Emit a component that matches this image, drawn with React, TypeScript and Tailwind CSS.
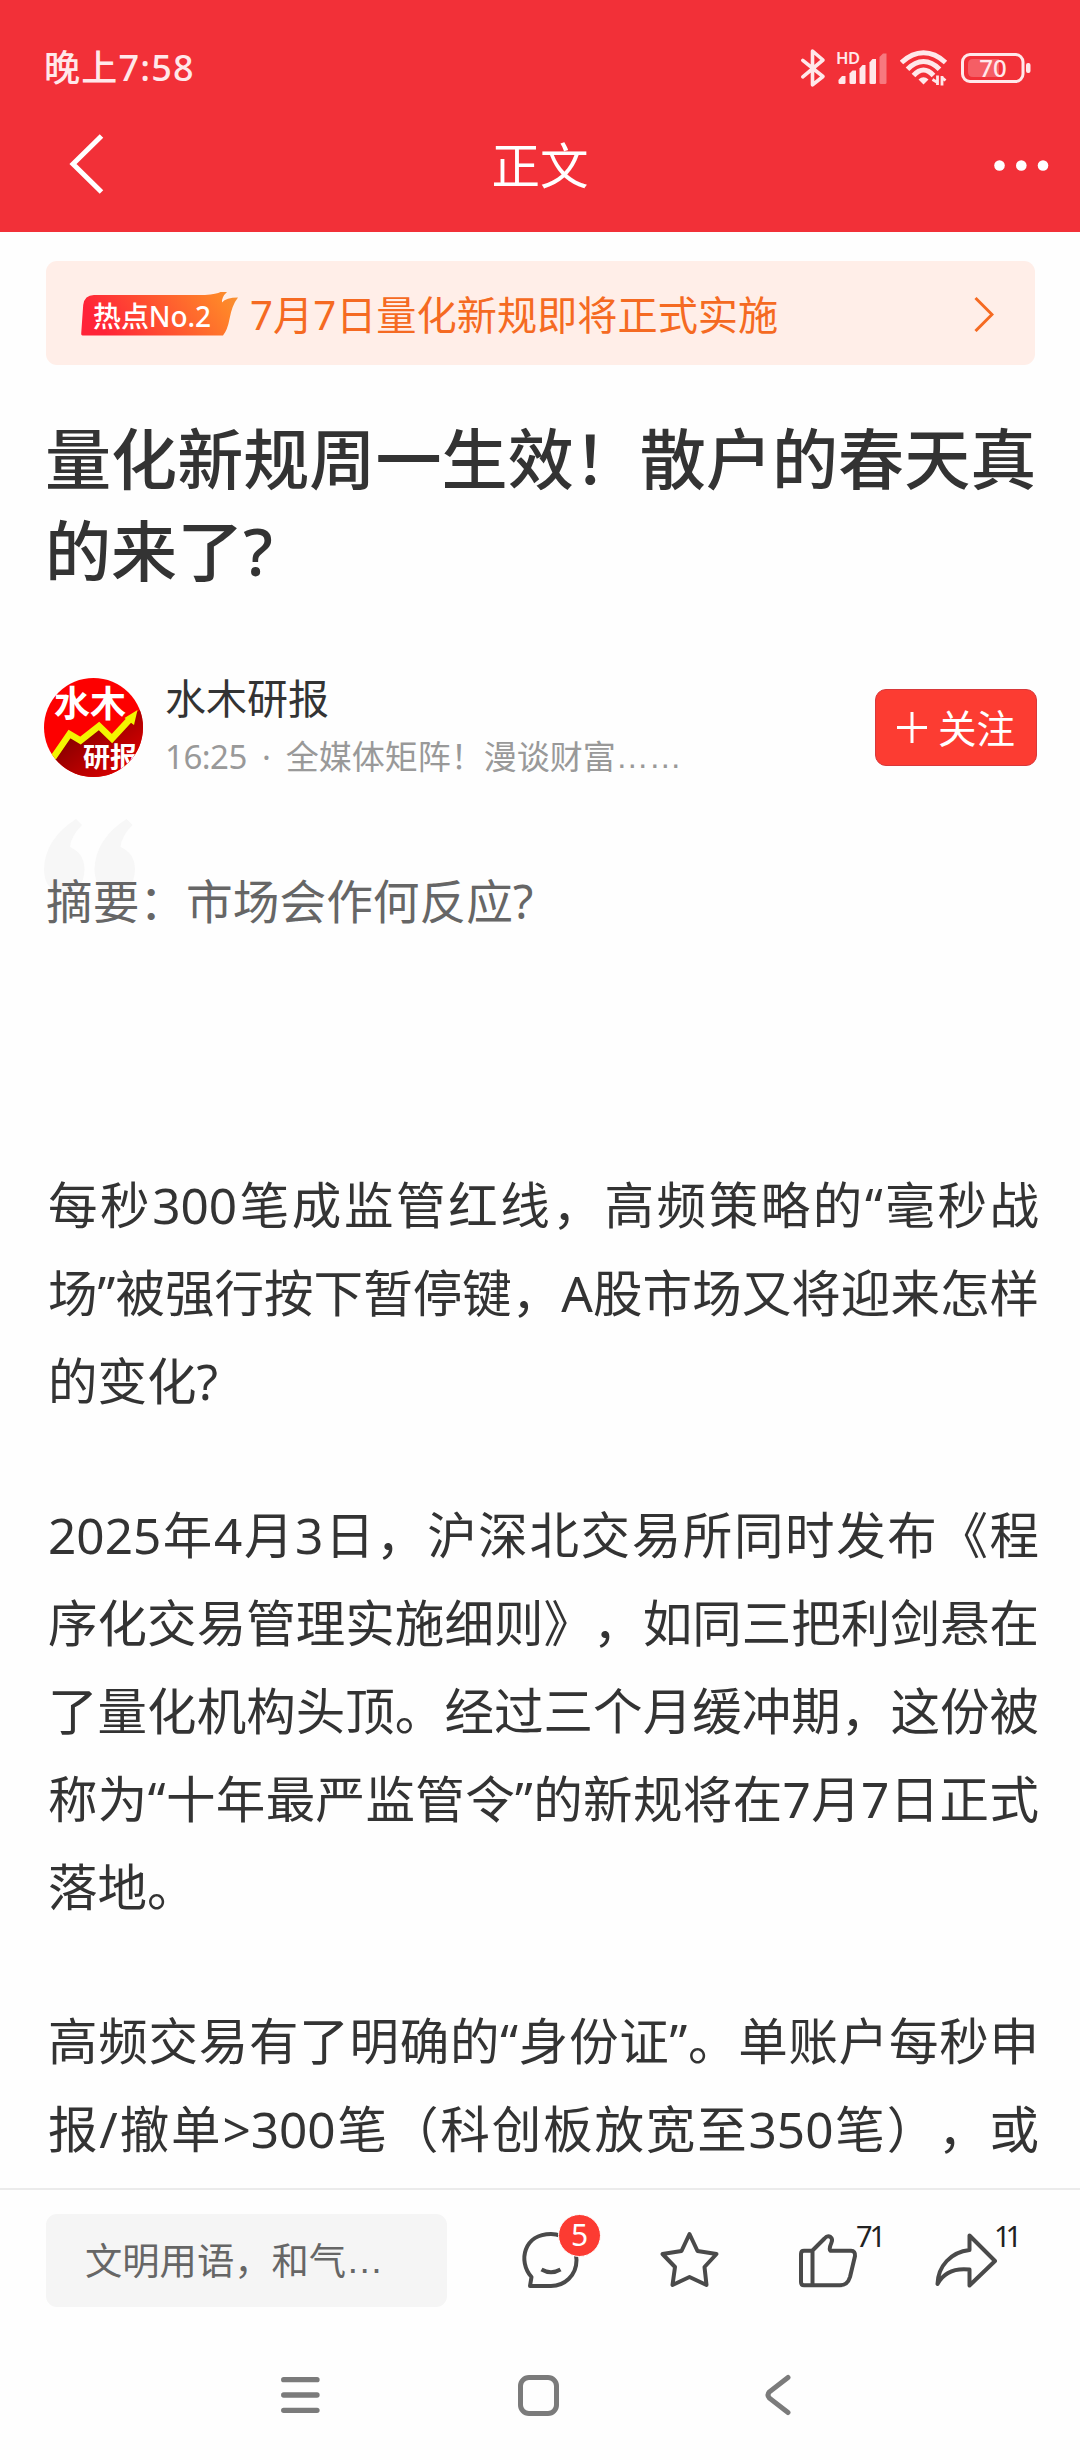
import { ReactNode } from "react";

const paragraphs = [
  [
    "每秒300笔成监管红线，高频策略的“毫秒战",
    "场”被强行按下暂停键，A股市场又将迎来怎样",
    "的变化?",
  ],
  [
    "2025年4月3日，沪深北交易所同时发布《程",
    "序化交易管理实施细则》，如同三把利剑悬在",
    "了量化机构头顶。经过三个月缓冲期，这份被",
    "称为“十年最严监管令”的新规将在7月7日正式",
    "落地。",
  ],
  [
    "高频交易有了明确的“身份证”。单账户每秒申",
    "报/撤单>300笔（科创板放宽至350笔），或",
  ],
];

function BluetoothIcon() {
  return (
    <svg width="26" height="40" viewBox="0 0 26 40" fill="none" stroke="currentColor" strokeWidth="3.6" strokeLinejoin="round" strokeLinecap="round">
      <path d="M2.8 12.4 L23 28.5 L12.5 36.8 V3 L23 12 L2.8 28.8" />
    </svg>
  );
}

function SignalIcon() {
  return (
    <svg className="overflow-visible" width="52" height="36" viewBox="0 0 52 36" fill="currentColor">
      <text x="0" y="15" fontSize="16.5" fontWeight="600" fontFamily="Noto Sans, sans-serif" textLength="24">HD</text>
      <path d="M2.5 31 L6 27 H9.5 V33.5 Q9.5 35 8 35 H4 Q2.5 35 2.5 33.5 Z" />
      <path d="M13.5 24.5 L16.5 21.5 H20 V33.5 Q20 35 18.5 35 H15 Q13.5 35 13.5 33.5 Z" />
      <path d="M23.5 19.5 L26.5 16 H29.5 V33.5 Q29.5 35 28 35 H25 Q23.5 35 23.5 33.5 Z" />
      <path d="M33.5 13.5 L36.5 10 H40 V33.5 Q40 35 38.5 35 H35 Q33.5 35 33.5 33.5 Z" />
      <path opacity=".4" d="M43.5 8 L47 4.5 H50.5 V33.5 Q50.5 35 49 35 H45 Q43.5 35 43.5 33.5 Z" />
    </svg>
  );
}

function WifiIcon() {
  return (
    <svg width="48" height="38" viewBox="0 0 48 38" fill="none" stroke="currentColor" strokeWidth="5">
      <path d="M1.5 14.5 Q12 4.8 23.5 4.8 Q35 4.8 45.5 14.5" />
      <path d="M7.5 21.2 Q15 13.4 23.5 13.4 Q32 13.4 39.5 21.2" />
      <path d="M13.5 27.5 Q18.5 22 23.5 22 Q28.5 22 33.5 27.5" />
      <path d="M18.5 31.5 Q23.5 27 28.5 31.5 L23.5 36.5 Z" fill="currentColor" stroke="none" />
      <path d="M37.5 27.5 V37 M37.5 34.5 L32.5 31.5 M42 37.5 V28 M42 29.5 L45.5 32.5" strokeWidth="2.8" />
    </svg>
  );
}

function BatteryIcon() {
  return (
    <svg width="71" height="32" viewBox="0 0 71 32" fill="none">
      <rect x="1.5" y="2.5" width="60.5" height="27" rx="7.5" stroke="currentColor" strokeWidth="3" />
      <path d="M12 7 H38 V25 H12 Q7 25 7 20 V12 Q7 7 12 7 Z" fill="currentColor" opacity=".25" />
      <rect x="65" y="11" width="4.5" height="10" rx="2" fill="currentColor" />
      <text x="32" y="24.6" textAnchor="middle" fontSize="24" fontWeight="500" fontFamily="Noto Sans, sans-serif" fill="currentColor">70</text>
    </svg>
  );
}

function HotBadge() {
  return (
    <svg width="158" height="46" viewBox="0 0 158 46">
      <defs>
        <linearGradient id="hot" x1="0" y1="0.2" x2="1" y2="0">
          <stop offset="0" stopColor="#ff2338" />
          <stop offset="0.85" stopColor="#ff8429" />
          <stop offset="1" stopColor="#f59335" />
        </linearGradient>
      </defs>
      <path
        d="M1.5 45.5 Q0 45.5 .2 43.5 L2.2 15 Q3.5 5 13 5 H124 Q136 4 139.5 2 H146 Q140.5 7 141 12.5 Q145 7.5 157 7.5 Q151 15 148.5 29 Q146.5 40 142 45.5 Z"
        fill="url(#hot)"
      />
      <text x="12" y="36.5" fontSize="28" fontWeight="500" fontFamily="Noto Sans, Noto Sans CJK SC, sans-serif" fill="#fff" textLength="118">热点No.2</text>
    </svg>
  );
}

function Avatar() {
  return (
    <svg className="overflow-visible" width="99" height="99" viewBox="0 0 99 99">
      <defs>
        <linearGradient id="shade" x1="0.2" y1="0.3" x2="0.9" y2="1">
          <stop offset="0.1" stopColor="#8c0000" />
          <stop offset="1" stopColor="#e80000" />
        </linearGradient>
        <clipPath id="round">
          <circle cx="49.5" cy="49.5" r="49.5" />
        </clipPath>
      </defs>
      <g clipPath="url(#round)">
        <rect width="99" height="99" fill="#fd0000" />
        <path d="M8 86 L26 60 L37 65 L55 51 L68 62 L93 34 L99 30 V99 H8 Z" fill="url(#shade)" />
        <path d="M9 80 L25.5 56 L36.5 62.5 L55 48 L68 60.5 L87 40" fill="none" stroke="#f3f500" strokeWidth="6.5" />
        <path d="M93.5 32 L80.5 40 L90 47 Z" fill="#f3f500" />
        <text x="39" y="89" fontSize="27" fontWeight="700" fontFamily="Noto Sans CJK SC, sans-serif" fill="#fff">研报</text>
      </g>
      <text x="10" y="38.5" fontSize="36" fontWeight="700" fontFamily="Noto Sans CJK SC, sans-serif" fill="#fff">水木</text>
    </svg>
  );
}

function QuoteMark() {
  return (
    <svg width="92" height="74" viewBox="0 0 92 74" fill="#f7f7f7">
      <path d="M32 0 L38 6 Q27 17 26 28 Q40 34 40.5 50 Q40 73 20 74 Q0 72 0 50 Q1 20 32 0 Z" />
      <path d="M82.5 0 L88.5 6 Q77.5 17 76.5 28 Q90.5 34 91 50 Q90.5 73 70.5 74 Q50.5 72 50.5 50 Q51.5 20 82.5 0 Z" />
    </svg>
  );
}

function ActionIcon({ children }: { children: ReactNode }) {
  return (
    <svg width="66" height="60" viewBox="0 0 66 60" fill="none" stroke="#4a4a4a" strokeWidth="4" strokeLinejoin="round" strokeLinecap="round">
      {children}
    </svg>
  );
}

export default function App() {
  return (
    <div className="w-[1080px] h-[2460px] flex flex-col bg-[#fefefe] overflow-hidden text-[#333] whitespace-nowrap [text-spacing-trim:space-all] font-['Noto_Sans','Noto_Sans_CJK_SC',sans-serif]">
      {/* Header */}
      <header className="h-[232px] bg-[#f23038] text-white shrink-0">
        <div className="h-[120px] pt-[48px] pl-[44px] pr-[48px] flex items-start justify-between text-[#ffe8ea]">
          <span className="text-[36px] leading-[40px] font-medium tracking-[1.2px]">晚上7:58</span>
          <div className="flex items-start">
            <BluetoothIcon />
            <div className="ml-[10px] mt-px">
              <SignalIcon />
            </div>
            <div className="ml-[12px]">
              <WifiIcon />
            </div>
            <div className="ml-[13px] mt-[4px]">
              <BatteryIcon />
            </div>
          </div>
        </div>
        <div className="h-[90px] px-[30px] grid grid-cols-[1fr_auto_1fr] items-center">
          <svg className="ml-[38px]" width="60" height="62" viewBox="0 0 60 62" fill="none" stroke="currentColor" strokeWidth="5">
            <path d="M33.5 2 L5 30 L33.5 58" />
          </svg>
          <h1 className="text-[48.5px] leading-[60px]">正文</h1>
          <svg className="justify-self-end" width="56" height="12" viewBox="0 0 56 12" fill="currentColor">
            <circle cx="5.5" cy="6.5" r="5.3" />
            <circle cx="27.3" cy="6.5" r="5.3" />
            <circle cx="49" cy="6.5" r="5.3" />
          </svg>
        </div>
      </header>

      <main className="px-[46px] flex-1 min-h-0">
        {/* Hot topic */}
        <div className="mt-[29px] w-[989px] h-[104px] rounded-[11px] bg-[#ffeee8] pl-[35px] pr-[41px] flex items-center">
          <HotBadge />
          <span className="ml-[11px] pt-[4px] text-[40.2px] leading-[50px] text-[#f56a22]">7月7日量化新规即将正式实施</span>
          <svg className="ml-auto mt-px" width="20" height="36" viewBox="0 0 20 36" fill="none" stroke="#f56a22" strokeWidth="3">
            <path d="M1.5 2 L18 18.5 L1.5 35" />
          </svg>
        </div>

        {/* Title */}
        <h2 className="mt-[47px] -ml-px text-[66.1px] leading-[92px] font-medium text-[#333]">
          量化新规周一生效！散户的春天真
          <br />
          的来了?
        </h2>

        {/* Author */}
        <div className="mt-[77px] h-[108px] -ml-[2px] -mr-[3px] flex items-center">
          <Avatar />
          <div className="ml-[22px] flex flex-col">
            <span className="text-[41px] leading-[58px]">水木研报</span>
            <span className="flex text-[33px] leading-[58px] pt-px text-[#999]">
              <span className="tracking-[-0.5px]">16:25</span>
              <span className="w-[39px] text-center">·</span>
              全媒体矩阵！漫谈财富
              <span className="font-['Liberation_Sans',sans-serif]">……</span>
            </span>
          </div>
          <button className="ml-auto w-[162px] h-[77px] rounded-[11px] border border-[#d8383a] bg-[#fc3c32] text-white flex items-center pl-[21px]">
            <svg width="30" height="31" viewBox="0 0 30 31" stroke="currentColor" strokeWidth="3">
              <path d="M0 15.5 H30 M15 0 V31" />
            </svg>
            <span className="ml-[11px] pt-[2px] text-[38.5px] leading-[50px]">关注</span>
          </button>
        </div>

        {/* Summary */}
        <div className="relative mt-[36px] h-[116px] pt-[54px]">
          <div className="absolute -left-[2px] top-[2px]">
            <QuoteMark />
          </div>
          <p className="relative text-[46.7px] leading-[60px] text-[#666]">摘要：市场会作何反应?</p>
        </div>

        {/* Article */}
        <article className="mt-[228px] ml-[2px] w-[991px] text-[49.5px] leading-[88px]">
          {paragraphs.map((lines, i) => (
            <div key={i} className="mb-[66px] last:mb-0">
              {lines.map((line, j) => (
                <p
                  key={line}
                  className={i < 2 && j === lines.length - 1 ? "" : "[text-align-last:justify]"}
                >
                  {line}
                </p>
              ))}
            </div>
          ))}
        </article>
      </main>

      {/* Comment bar */}
      <footer className="h-[272px] shrink-0 border-t-2 border-[#ebebeb] bg-[#fefefe]">
        <div className="h-[140px] pl-[46px] pt-[24px] flex items-start">
          <div className="w-[401px] h-[93px] rounded-[11px] bg-[#f5f5f5] pl-[39px] flex items-center text-[37.3px] text-[#666]">
            文明用语，和气
            <span className="font-['Liberation_Sans',sans-serif]">…</span>
          </div>
          <div className="flex pt-[14px]">
            <div className="relative ml-[71px]">
              <ActionIcon>
                <path d="M13.5 49 C-.5 33 6 6 33 6 C47 6 58.5 18 58.5 32 C58.5 48 46 58 33 58 H12 Z" />
                <path d="M23.5 41.5 Q33 47 42.5 41.5" strokeLinecap="butt" />
              </ActionIcon>
              <span className="absolute left-[40px] -top-[14px] size-[43px] rounded-full border border-white bg-[#fc3b32] text-white text-[30px] leading-[39px] text-center">5</span>
            </div>
            <div className="relative ml-[73px]">
              <ActionIcon>
                <path d="M32.5 6 L40.5 23 L59.5 26 L47.5 39 L49.5 57 L32.5 49 L15.5 57 L18 39 L5.5 26 L24.5 23 Z" />
              </ActionIcon>
            </div>
            <div className="relative ml-[73px]">
              <ActionIcon>
                <path d="M16.5 22.5 L28.5 10.5 Q31.5 7 34.5 9 Q37 11 35.5 14.5 Q32.5 21.5 34.5 22.8 H55 Q59.5 23 59 28 L54 49 Q51.5 57.3 44 57.3 H8 Q5 57.3 5 54 V26 Q5 22.8 8 22.8 H16.5 V57" />
              </ActionIcon>
              <span className="absolute left-[60px] -top-[12px] text-[29px] leading-[40px] tracking-[-3px] text-[#222]">71</span>
            </div>
            <div className="relative ml-[72px]">
              <ActionIcon>
                <path d="M35.5 7.5 L61 33 L35.5 57.5 V41.5 C22 40 10 44 3.5 56 C4 38 17 24 35.5 22 Z" />
              </ActionIcon>
              <span className="absolute left-[60px] -top-[12px] text-[29px] leading-[40px] tracking-[-5px] text-[#222]">11</span>
            </div>
          </div>
        </div>

        {/* System navigation */}
        <nav className="pl-[281px] pt-[44px] flex items-center text-[#7b7b7b]">
          <svg width="39" height="42" viewBox="0 0 39 42" stroke="currentColor" strokeWidth="5.3" strokeLinecap="round">
            <path d="M2.7 5.7 H36 M2.7 21 H36 M2.7 36.3 H36" />
          </svg>
          <div className="ml-[198px] size-[41px] rounded-[11px] border-[5px] border-current" />
          <svg className="ml-[205px]" width="28" height="42" viewBox="0 0 28 42" fill="none" stroke="currentColor" strokeWidth="5" strokeLinecap="round">
            <path d="M24 3.5 L5.5 17.8 Q2.5 21 5.5 24.2 L24 38.5" />
          </svg>
        </nav>
      </footer>
    </div>
  );
}
